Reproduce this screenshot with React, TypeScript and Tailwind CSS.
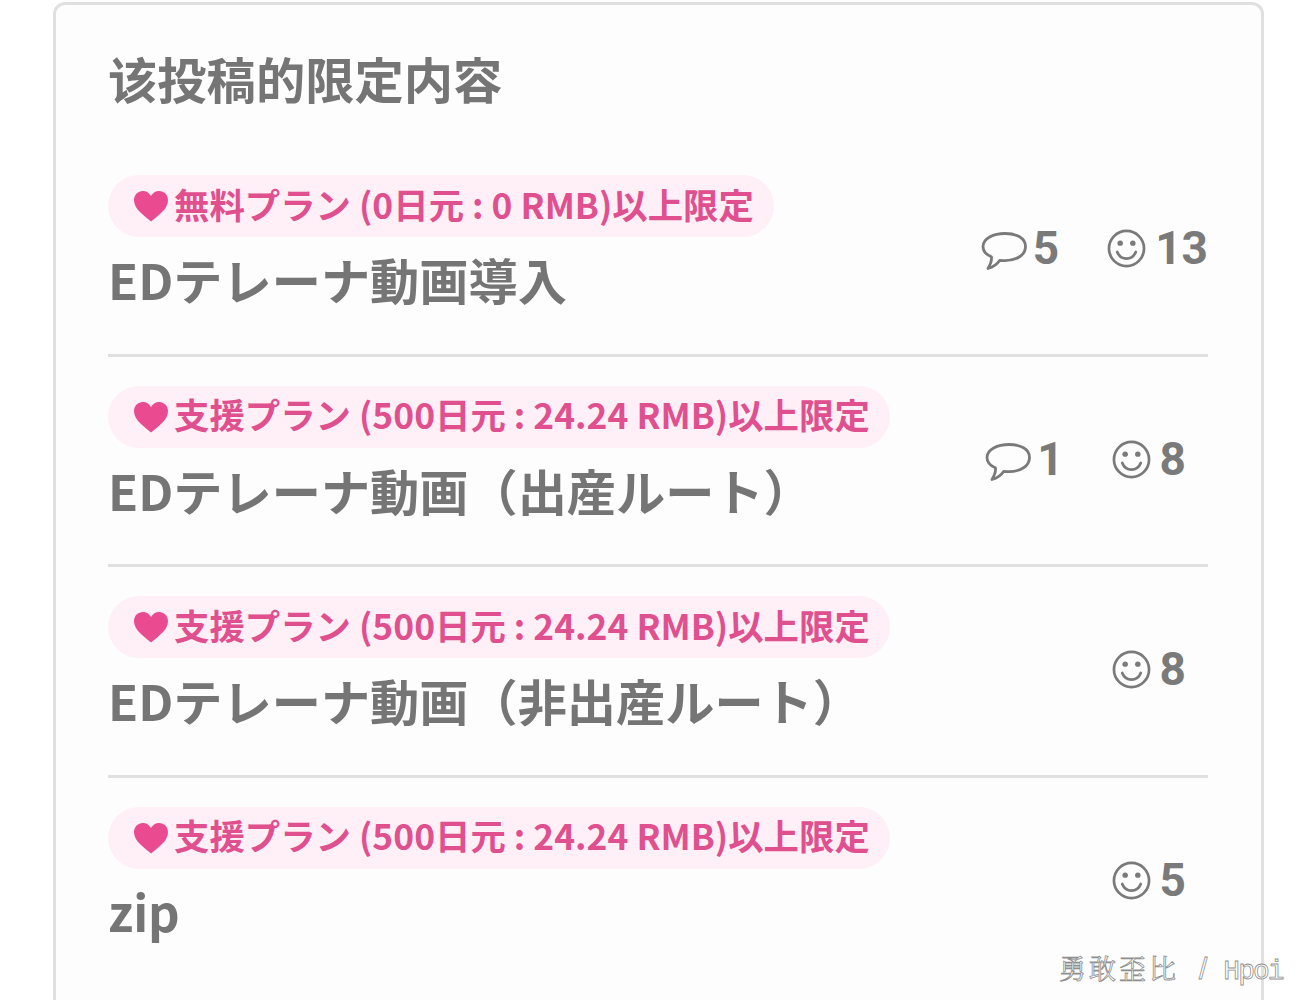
import React from "react";

const FONT = "font-['Noto_Sans_CJK_JP','Noto_Sans',sans-serif]";

const Heart = () => (
  <svg viewBox="0 0 36 32" className="w-[36px] h-[32px] shrink-0">
    <path
      d="M18 31.500C12 26 1 19.500 1 10.200 1 4.600 5.200 1 9.800 1c3.600 0 6.500 1.900 8.200 5 1.700-3.100 4.600-5 8.200-5C30.800 1 35 4.600 35 10.200 35 19.500 24 26 18 31.500z"
      fill="#ea4a90"
    />
  </svg>
);

const CommentIcon = () => (
  <svg viewBox="0 0 46 40" className="w-[46px] h-[40px] shrink-0 mt-[6px]" fill="none" stroke="#7a7a7a" strokeWidth="2.800" strokeLinejoin="round">
    <path d="M24 2.500C12.500 2.500 2 7.500 2 15.500c0 4.500 3.400 8.200 8.400 10.200.6 3.500-.8 7.500-3.400 11.800 4.800-1.300 9-3.900 11.800-8.200 1.700.2 3.400.3 5.200.3 11.500 0 20.500-5.500 20.500-14.100S35.500 2.500 24 2.500z" />
  </svg>
);

const SmileIcon = () => (
  <svg viewBox="0 0 40 40" className="w-[39px] h-[39px] shrink-0 mt-[1px]" fill="none">
    <circle cx="20" cy="20" r="18" stroke="#7a7a7a" strokeWidth="2.800" />
    <circle cx="13.500" cy="14.500" r="2.800" fill="#7a7a7a" />
    <circle cx="26.500" cy="14.500" r="2.800" fill="#7a7a7a" />
    <path d="M10.500 23.500c1.800 4.500 5.200 6.800 9.500 6.800s7.700-2.300 9.500-6.800" stroke="#7a7a7a" strokeWidth="2.800" strokeLinecap="round" />
  </svg>
);

type Post = {
  plan: string;
  title: string;
  comments?: number;
  likes: number;
};

const posts: Post[] = [
  { plan: "無料プラン (0日元 : 0 RMB)以上限定", title: "EDテレーナ動画導入", comments: 5, likes: 13 },
  { plan: "支援プラン (500日元 : 24.24 RMB)以上限定", title: "EDテレーナ動画（出産ルート）", comments: 1, likes: 8 },
  { plan: "支援プラン (500日元 : 24.24 RMB)以上限定", title: "EDテレーナ動画（非出産ルート）", likes: 8 },
  { plan: "支援プラン (500日元 : 24.24 RMB)以上限定", title: "zip", likes: 5 },
];

const PostRow = ({ post, last }: { post: Post; last: boolean }) => (
  <div className={`h-[210.500px] pt-[29px] flex justify-between ${last ? "" : "border-b-[3px] border-[#e0e0e0]"}`}>
    <div className="flex flex-col items-start">
      <div className="h-[62px] rounded-full bg-[#fff0f7] pl-[25px] pr-[20px] flex items-center gap-[5px]">
        <Heart />
        <span className="text-[35.400px] leading-[62px] -mt-[5px] font-bold text-[#e0508f] whitespace-nowrap">{post.plan}</span>
      </div>
      <div className="text-[49.200px] leading-[70px] mt-[7px] font-bold text-[#757575] whitespace-nowrap">{post.title}</div>
    </div>
    <div className="flex items-start pt-[40px] text-[46px] leading-[66px] font-bold font-['Roboto',sans-serif] text-[#7a7a7a] w-[226px] justify-end">
      {post.comments !== undefined && (
        <div className="flex items-center gap-[6px] h-[66px]">
          <CommentIcon />
          <span>{post.comments}</span>
        </div>
      )}
      <div className={`flex items-center gap-[9px] h-[66px] ml-[48px] ${post.likes < 10 ? "mr-[22px]" : ""}`}>
        <SmileIcon />
        <span>{post.likes}</span>
      </div>
    </div>
  </div>
);

export default function App() {
  return (
    <div className={`${FONT} relative h-[1000px] w-[1316px] overflow-hidden bg-white`}>
      <div className="ml-[53px] mt-[2px] w-[1211px] h-[1100px] rounded-[12px] border-[3px] border-[#e0e0e0] bg-[#fdfdfd] pl-[52px] pr-[53px]">
        <h2 className="pt-[33px] h-[141px] text-[49.300px] leading-[80px] font-bold text-[#757575]">该投稿的限定内容</h2>
        {posts.map((post, i) => (
          <PostRow key={i} post={post} last={i === posts.length - 1} />
        ))}
      </div>
      <div className="absolute left-[1059px] top-[949px] text-[27px] leading-[38px] text-white [-webkit-text-stroke:0.8px_#8f8f8f] whitespace-nowrap">
        <span className="font-['Noto_Serif_CJK_SC','Noto_Sans_CJK_SC',serif] tracking-[3px]">勇敢歪比</span>
        <span className="font-['Liberation_Sans',sans-serif] ml-[20px] text-[30px]">/</span>
        <span className="font-['Liberation_Mono',monospace] ml-[16px] text-[28px] tracking-[-2px]">Hpoi</span>
      </div>
    </div>
  );
}
